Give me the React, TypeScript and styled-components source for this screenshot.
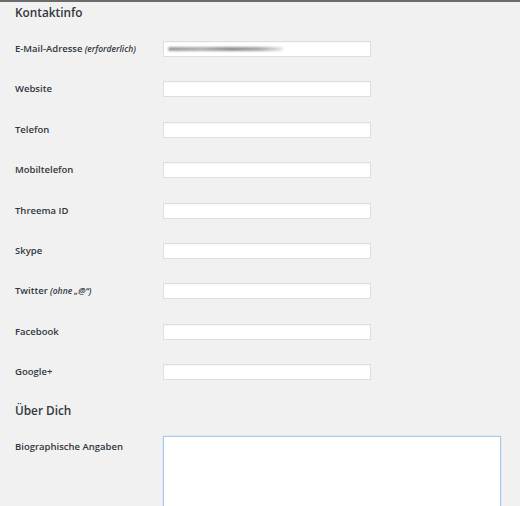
import React from 'react';
import styled, {createGlobalStyle} from "styled-components";

const GlobalStyle = createGlobalStyle`
    html, body {
        margin: 0;
        padding: 0;
        background: #f1f1f1;
    }
    body {
        font-family: "Open Sans", "Noto Sans", sans-serif;
        color: #23282d;
    }
`

const fields = [
    {label: 'E-Mail-Adresse', note: '(erforderlich)', blurred: true},
    {label: 'Website'},
    {label: 'Telefon'},
    {label: 'Mobiltelefon'},
    {label: 'Threema ID'},
    {label: 'Skype'},
    {label: 'Twitter', note: '(ohne „@“)'},
    {label: 'Facebook'},
    {label: 'Google+'},
];

export default function App() {
    return (
        <Page>
            <GlobalStyle/>
            <Heading>Kontaktinfo</Heading>
            <Rows>
                {fields.map((f) => (
                    <Row key={f.label}>
                        <Label>
                            {f.label}{f.note && <Note> {f.note}</Note>}
                        </Label>
                        <Input>
                            {f.blurred && <Smudge/>}
                        </Input>
                    </Row>
                ))}
            </Rows>
            <SecondHeading>Über Dich</SecondHeading>
            <BioRow>
                <Label>Biographische Angaben</Label>
                <TextArea/>
            </BioRow>
        </Page>
    );
}

const Page = styled.div`
    height: 506px;
    overflow: hidden;
    border-top: 2px solid #6b6b6b;
    box-sizing: border-box;
    padding-left: 15px;
`

const Heading = styled.h2`
    margin: 0;
    padding-top: 1px;
    height: 24px;
    line-height: 18px;
    font-size: 11.8px;
    font-weight: 600;
    color: #32373c;
`

const SecondHeading = styled(Heading)`
    padding-top: 0;
    height: 31.4px;
    line-height: 10px;
`

const Rows = styled.div`
    display: flex;
    flex-direction: column;
    padding-top: 14px;
`

const Row = styled.div`
    display: grid;
    grid-template-columns: 148px 208px;
    align-items: center;
    height: 40.4px;
    align-content: start;
`

const Label = styled.div`
    font-size: 9.5px;
    font-weight: 600;
    line-height: 16px;
    color: #32373c;
    white-space: nowrap;
`

const Note = styled.em`
    font-size: 8.5px;
    font-weight: 600;
    font-style: italic;
`

const Input = styled.div`
    position: relative;
    height: 16px;
    background: #fff;
    border: 1px solid #dedede;
    box-sizing: border-box;
    box-shadow: inset 0 1px 1px rgba(0, 0, 0, 0.03);
`

const Smudge = styled.div`
    position: absolute;
    left: 4px;
    top: 5px;
    width: 115px;
    height: 4px;
    border-radius: 3px;
    background: linear-gradient(90deg, #9a9a9a 0%, #b0b0b0 30%, #8e8e8e 55%, #a8a8a8 80%, rgba(180, 180, 180, 0.3) 100%);
    filter: blur(1px);
`

const BioRow = styled.div`
    display: grid;
    grid-template-columns: 148px 338px;
    align-items: start;
    & > ${Label} {
        padding-top: 3px;
    }
`

const TextArea = styled.div`
    height: 90px;
    background: #fff;
    border: 1px solid #a6cdf0;
    box-shadow: 0 0 1px rgba(91, 157, 217, 0.6);
    box-sizing: border-box;
`
